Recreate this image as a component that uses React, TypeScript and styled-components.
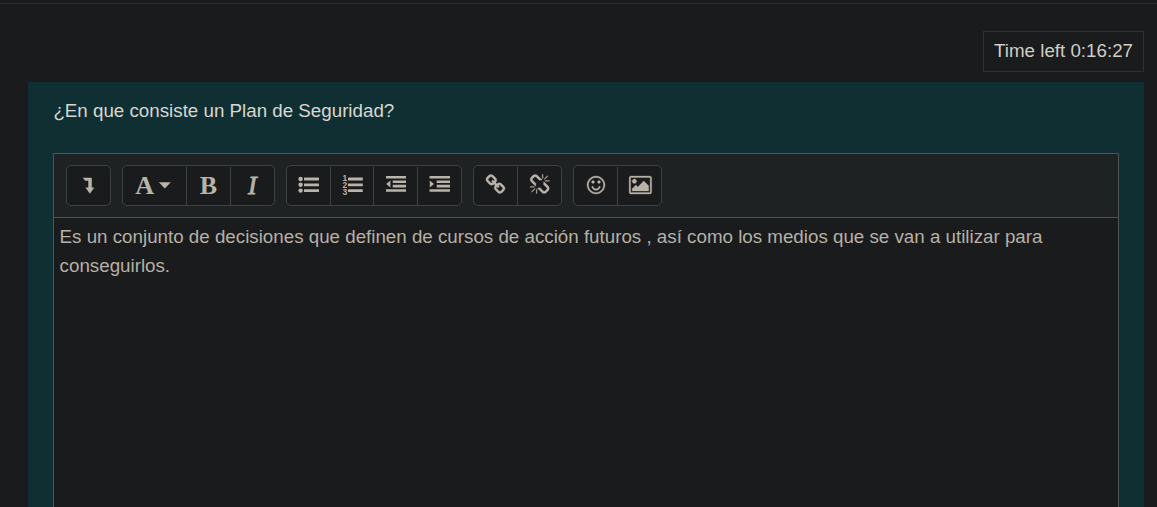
import React from 'react';
import styled, { createGlobalStyle } from 'styled-components';

const GlobalStyle = createGlobalStyle`
  * { box-sizing: border-box; }
  body {
    margin: 0;
    height: 507px;
    overflow: hidden;
    background: #1a1b1d;
    font-family: "Liberation Sans", Arial, sans-serif;
    font-size: 18.75px;
    line-height: 29px;
  }
`;

const Page = styled.main`
  display: flex;
  flex-direction: column;
  height: 507px;
  overflow: hidden;
  padding: 3px 13px 0 28px;
`;

const TopRule = styled.div`
  flex: none;
  height: 1px;
  margin: 0 -13px 0 -28px;
  background: #2a2c2e;
`;

const Timer = styled.div`
  flex: none;
  align-self: flex-end;
  height: 41px;
  margin: 27px 0 10px;
  padding: 4px 10px;
  border: 1px solid #a00000;
  color: #d1cdc5;
  white-space: nowrap;
`;

const Question = styled.section`
  flex: 1;
  display: flex;
  flex-direction: column;
  min-height: 0;
  padding: 14px 25px 0;
  background: #0f2f33;
`;

const Prompt = styled.p`
  margin: 0 0 28px;
  padding-left: 0.4px;
  color: #dad7d0;
`;

const Editor = styled.div`
  flex: 1;
  display: flex;
  flex-direction: column;
  border: 1px solid #4b5557;
  border-bottom: 0;
  background: #1a1b1d;
`;

const Toolbar = styled.div`
  display: flex;
  gap: 11px;
  height: 64px;
  padding: 11px 12px;
  border-bottom: 1px solid #4b5557;
  background: #1f2223;
`;

const Group = styled.div`
  display: flex;
  height: 41px;
  border: 1px solid #3c4344;
  border-radius: 5px;
  background: #1a1b1d;
  overflow: hidden;
`;

const Tool = styled.button<{ $width?: number }>`
  display: block;
  width: ${({ $width = 43 }) => $width}px;
  height: 39px;
  padding: 0;
  border: 0;
  background: none;
  color: #b9b3a9;

  svg { display: block; fill: currentColor; }
`;

const Divider = styled.span`
  width: 1px;
  margin-top: 1px;
  background: #3c4344;
`;

const Answer = styled.div`
  padding: 4px 5.6px;
  color: #b6b0a6;
`;

const Letter = styled.text<{ $italic?: boolean }>`
  font: ${({ $italic }) => ($italic ? 'italic normal' : 'normal bold')} 26px "Liberation Serif", serif;
  stroke: currentColor;
  stroke-width: ${({ $italic }) => ($italic ? 0.8 : 0)}px;
`;

const Digit = styled.text`
  font: bold 8.5px "Liberation Sans", sans-serif;
`;

const Canvas = ({ width = 43, children }: { width?: number; children: React.ReactNode }) => (
  <svg width={width} height="39" viewBox={`0 0 ${width} 39`}>{children}</svg>
);

const Glyph = ({ d, x = 22, y = 19 }: { d: string; x?: number; y?: number }) => (
  <Canvas>
    <path
      transform={`translate(${x - 10.5} ${y - 10.5}) scale(${21 / 1792})`}
      d={d}
      stroke="currentColor"
      strokeWidth="26"
    />
  </Canvas>
);

const LINK = 'M1456 1216q0-40-28-68l-208-208q-28-28-68-28-42 0-72 32 3 3 19 18.5t21.5 21.5 15 19 13 25.5 3.5 27.5q0 40-28 68t-68 28q-15 0-27.5-3.5t-25.5-13-19-15-21.5-21.5-18.5-19q-33 31-33 73 0 40 28 68l206 207q27 27 68 27 40 0 68-26l147-146q28-28 28-67zm-703-705q0-40-28-68l-206-207q-28-28-68-28-39 0-68 27l-147 146q-28 28-28 67 0 40 28 68l208 208q27 27 68 27 42 0 72-31-3-3-19-18.5t-21.5-21.5-15-19-13-25.5-3.5-27.5q0-40 28-68t68-28q15 0 27.5 3.5t25.5 13 19 15 21.5 21.5 18.5 19q33-31 33-73zm895 705q0 120-85 203l-147 146q-83 83-203 83-121 0-204-85l-206-207q-83-83-83-203 0-123 88-209l-88-88q-86 88-208 88-120 0-204-84l-208-208q-84-84-84-204t85-203l147-146q83-83 203-83 121 0 204 85l206 207q83 83 83 203 0 123-88 209l88 88q86-88 208-88 120 0 204 84l208 208q84 84 84 204z';
const UNLINK = 'M503 1271l-256 256q-10 9-23 9-12 0-23-9-9-10-9-23t9-23l256-256q10-9 23-9t23 9q9 10 9 23t-9 23zm169 41v320q0 14-9 23t-23 9-23-9-9-23v-320q0-14 9-23t23-9 23 9 9 23zm-224-224q0 14-9 23t-23 9h-320q-14 0-23-9t-9-23 9-23 23-9h320q14 0 23 9t9 23zm1264 128q0 120-85 203l-147 146q-83 83-203 83-121 0-204-85l-334-335q-21-21-42-56l239-18 273 274q27 27 68 27.5t68-26.5l147-146q28-28 28-67 0-40-28-68l-274-275 18-239q35 21 56 42l336 336q84 86 84 204zm-617-724l-239 18-273-274q-28-28-68-28-39 0-68 27l-147 146q-28 28-28 67 0 40 28 68l274 274-18 240q-35-21-56-42l-336-336q-84-86-84-204 0-120 85-203l147-146q83-83 203-83 121 0 204 85l334 335q21 21 42 56zm633 84q0 14-9 23t-23 9h-320q-14 0-23-9t-9-23 9-23 23-9h320q14 0 23 9t9 23zm-544-544v320q0 14-9 23t-23 9-23-9-9-23v-320q0-14 9-23t23-9 23 9 9 23zm407 151l-256 256q-11 9-23 9t-23-9q-9-10-9-23t9-23l256-256q10-9 23-9t23 9q9 10 9 23t-9 23z';
const SMILE = 'M1262 1075q-37 121-138 195t-228 74-228-74-138-195q-8-25 4-48.5t38-31.5q25-8 48.5 4t31.5 38q25 80 92.5 129.5t151.5 49.5 151.5-49.5 92.5-129.5q8-26 32-38t49-4 37 31.5 4 48.5zm-494-435q0 53-37.5 90.5t-90.5 37.5-90.5-37.5-37.5-90.5 37.5-90.5 90.5-37.5 90.5 37.5 37.5 90.5zm512 0q0 53-37.5 90.5t-90.5 37.5-90.5-37.5-37.5-90.5 37.5-90.5 90.5-37.5 90.5 37.5 37.5 90.5zm256 256q0-130-51-248.5t-136.5-204-204-136.5-248.5-51-248.5 51-204 136.5-136.5 204-51 248.5 51 248.5 136.5 204 204 136.5 248.5 51 248.5-51 204-136.5 136.5-204 51-248.5zm128 0q0 209-103 385.5t-279.5 279.5-385.5 103-385.5-103-279.5-279.5-103-385.5 103-385.5 279.5-279.5 385.5-103 385.5 103 279.5 279.5 103 385.5z';
const IMAGE = 'M576 576q0 80-56 136t-136 56-136-56-56-136 56-136 136-56 136 56 56 136zm1024 384v448h-1408v-192l320-320 160 160 512-512zm96-704h-1600q-13 0-22.5 9.5t-9.5 22.5v1216q0 13 9.5 22.5t22.5 9.5h1600q13 0 22.5-9.5t9.5-22.5v-1216q0-13-9.5-22.5t-22.5-9.5zm160 32v1216q0 66-47 113t-113 47h-1600q-66 0-113-47t-47-113v-1216q0-66 47-113t113-47h1600q66 0 113 47t47 113z';

export default function App() {
  return (
    <>
      <GlobalStyle />
      <Page>
        <TopRule />
        <Timer>Time left 0:16:27</Timer>
        <Question>
          <Prompt>¿En que consiste un Plan de Seguridad?</Prompt>
          <Editor>
            <Toolbar>
              <Group>
                <Tool aria-label="Expand">
                  <Canvas>
                    <path d="M15.7 11.7H24.3q.5 0 .5.5V21.6H27.3L22.9 27.7 18.4 21.6H21.3V14.7H18.2Z" />
                  </Canvas>
                </Tool>
              </Group>
              <Group>
                <Tool $width={63} aria-label="Paragraph styles">
                  <Canvas width={63}>
                    <Letter x="12.2" y="27.6">A</Letter>
                    <path d="M35.8 16.2H47.8L41.8 22.4Z" />
                  </Canvas>
                </Tool>
                <Divider />
                <Tool aria-label="Bold">
                  <Canvas><Letter x="12.7" y="27.6">B</Letter></Canvas>
                </Tool>
                <Divider />
                <Tool aria-label="Italic">
                  <Canvas><Letter $italic x="16.9" y="27.6">I</Letter></Canvas>
                </Tool>
              </Group>
              <Group>
                <Tool aria-label="Unordered list">
                  <Canvas>
                    {[13, 18.8, 24.6].map((y) => (
                      <g key={y}>
                        <circle cx="13.6" cy={y} r="2.2" />
                        <rect x="17" y={y - 1.4} width="15" height="2.8" rx=".3" />
                      </g>
                    ))}
                  </Canvas>
                </Tool>
                <Divider />
                <Tool $width={42} aria-label="Ordered list">
                  <Canvas width={42}>
                    {[13, 18.8, 24.6].map((y, i) => (
                      <g key={y}>
                        <Digit x="11.4" y={15.2 + i * 6.8}>{i + 1}</Digit>
                        <rect x="17" y={y - 1.4} width="14.8" height="2.8" rx=".3" />
                      </g>
                    ))}
                  </Canvas>
                </Tool>
                <Divider />
                <Tool aria-label="Outdent">
                  <Canvas>
                    <path d="M12 10h20v2.6H12zM18.7 14.4H32V17H18.7zM18.7 18.8H32v2.6H18.7zM12 23.2h20v2.6H12zM16.4 14.4v7L12.2 17.9z" />
                  </Canvas>
                </Tool>
                <Divider />
                <Tool aria-label="Indent">
                  <Canvas>
                    <path d="M11.5 10H32v2.6H11.5zM18.7 14.4H32V17H18.7zM18.7 18.8H32v2.6H18.7zM11.5 23.2H32v2.6H11.5zM11.8 14.4v7L16 17.9z" />
                  </Canvas>
                </Tool>
              </Group>
              <Group>
                <Tool aria-label="Link"><Glyph d={LINK} x={22.2} y={18.7} /></Tool>
                <Divider />
                <Tool aria-label="Unlink"><Glyph d={UNLINK} x={21.7} y={18.7} /></Tool>
              </Group>
              <Group>
                <Tool aria-label="Emoji picker"><Glyph d={SMILE} /></Tool>
                <Divider />
                <Tool aria-label="Insert image"><Glyph d={IMAGE} x={22.4} /></Tool>
              </Group>
            </Toolbar>
            <Answer>
              Es un conjunto de decisiones que definen de cursos de acción futuros , así como los medios que se van a utilizar para conseguirlos.
            </Answer>
          </Editor>
        </Question>
      </Page>
    </>
  );
}
